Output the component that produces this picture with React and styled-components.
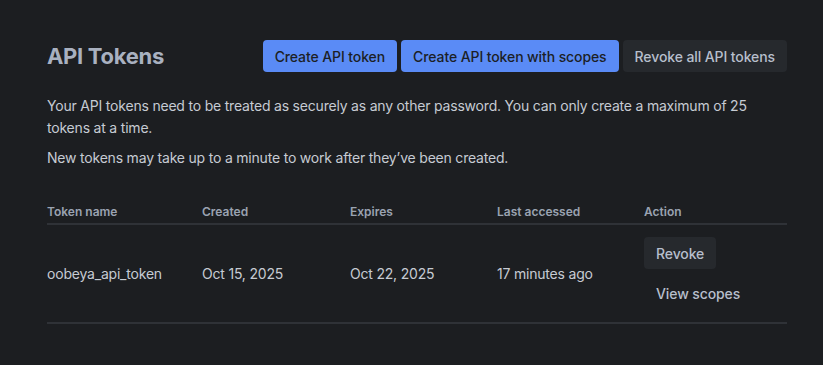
import React from "react";
import styled, { createGlobalStyle } from "styled-components";

const Global = createGlobalStyle`
  html, body { margin: 0; padding: 0; background: #1c1e21; }
  body { font-family: Inter, "Noto Sans", sans-serif; -webkit-font-smoothing: antialiased; }
`;

const Page = styled.div`
  padding: 40px 36px 0 47px;
  width: 740px;
  color: #c6cbd3;
`;

const Header = styled.div`
  display: flex;
  align-items: center;
  justify-content: space-between;
  margin-bottom: 23px;
`;

const Title = styled.h1`
  margin: 0;
  font-size: 22px;
  font-weight: 700;
  color: #a9b1c0;
  letter-spacing: -0.3px;
`;

const Actions = styled.div`
  display: flex;
  gap: 4px;
`;

const Button = styled.button`
  height: 32px;
  padding: 0 12px;
  border: none;
  border-radius: 4px;
  font-family: inherit;
  font-size: 14px;
  font-weight: 500;
  letter-spacing: -0.1px;
  cursor: pointer;
  background: ${(p) =>
    p.$variant === "primary" ? "#5a8bf6" : p.$variant === "ghost" ? "transparent" : "#26292d"};
  color: ${(p) => (p.$variant === "primary" ? "#1c1f26" : "#b7bfcc")};
`;

const Para = styled.p`
  margin: 0 0 8px;
  font-size: 14px;
  line-height: 22px;
  letter-spacing: -0.2px;
  color: #c6cbd3;
`;

const Table = styled.div`
  margin-top: 35px;
  display: grid;
  grid-template-columns: 155px 148px 147px 147px 1fr;
`;

const HeadCell = styled.div`
  font-size: 12px;
  font-weight: 600;
  color: #9aa3b1;
  padding-bottom: 4px;
  border-bottom: 2px solid #2f3237;
`;

const Cell = styled.div`
  display: flex;
  align-items: center;
  font-size: 14px;
  letter-spacing: -0.2px;
  color: #c6cbd3;
  padding: 12px 0 13px;
  border-bottom: 2px solid #2f3237;
`;

const ActionCell = styled(Cell)`
  flex-direction: column;
  align-items: flex-start;
  gap: 8px;
`;

export default function App() {
  return (
    <>
      <Global />
      <Page>
        <Header>
          <Title>API Tokens</Title>
          <Actions>
            <Button $variant="primary">Create API token</Button>
            <Button $variant="primary">Create API token with scopes</Button>
            <Button>Revoke all API tokens</Button>
          </Actions>
        </Header>
        <Para>
          Your API tokens need to be treated as securely as any other password. You can only create a
          maximum of 25 tokens at a time.
        </Para>
        <Para>New tokens may take up to a minute to work after they’ve been created.</Para>
        <Table>
          <HeadCell>Token name</HeadCell>
          <HeadCell>Created</HeadCell>
          <HeadCell>Expires</HeadCell>
          <HeadCell>Last accessed</HeadCell>
          <HeadCell>Action</HeadCell>
          <Cell>oobeya_api_token</Cell>
          <Cell>Oct 15, 2025</Cell>
          <Cell>Oct 22, 2025</Cell>
          <Cell>17 minutes ago</Cell>
          <ActionCell>
            <Button>Revoke</Button>
            <Button $variant="ghost">View scopes</Button>
          </ActionCell>
        </Table>
      </Page>
    </>
  );
}
